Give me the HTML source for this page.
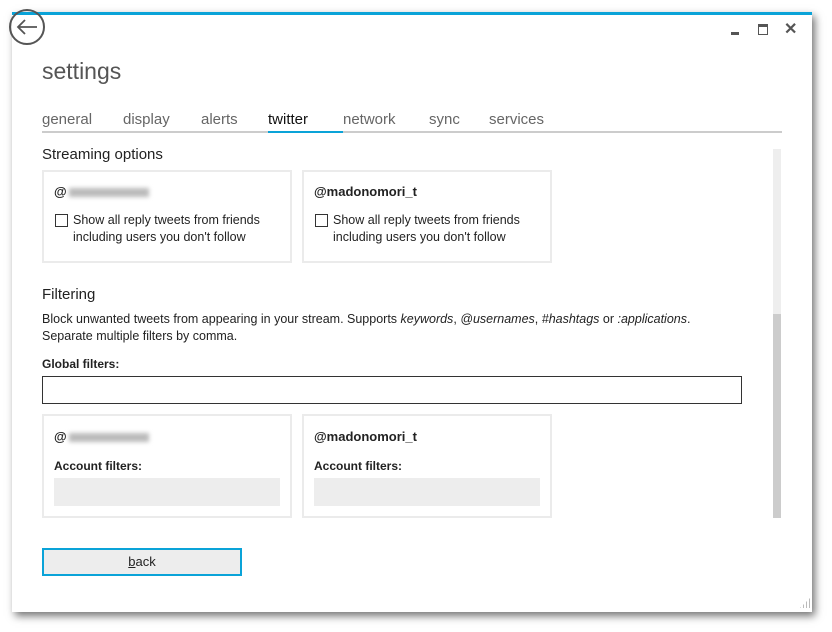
<!DOCTYPE html>
<html><head><meta charset="utf-8"><style>
*{box-sizing:border-box;margin:0;padding:0}
body{width:832px;height:632px;background:#fff;position:relative;overflow:hidden;font-family:"Segoe UI","Liberation Sans",sans-serif;color:#222}
.win{position:absolute;left:12px;top:12px;width:800px;height:600px;background:#fff;box-shadow:3px 4px 8px rgba(0,0,0,.55);border-top:3px solid #0aa3d8}
.abs{position:absolute}
.t{font-size:12.5px;color:#222}
.card{position:absolute;border:2px solid #ebebeb;background:#fff}
.tab{position:absolute;top:111px;font-size:15px;color:#666}
.cb{position:absolute;width:13px;height:13px;border:1px solid #333;background:#fff}
.blur{display:inline-block;width:80px;height:9px;background:#bbb;filter:blur(2px);vertical-align:middle;margin-left:2px}
.b{font-weight:bold;font-size:13px}
</style></head><body>
<div class="win"></div>
<svg class="abs" style="left:8px;top:8px" width="40" height="40"><circle cx="19" cy="19" r="17" fill="none" stroke="#555" stroke-width="2"/><path d="M29 19H10M17 12l-7 7 7 7" fill="none" stroke="#555" stroke-width="1.8"/></svg>
<div class="abs" style="left:731px;top:32px;width:8px;height:3px;background:#555"></div>
<div class="abs" style="left:758px;top:24px;width:10px;height:11px;border:1.5px solid #555;border-top-width:3px"></div>
<div class="abs" style="left:784px;top:19px;font-size:16px;font-weight:bold;color:#555">✕</div>
<div class="abs" style="left:42px;top:58px;font-size:23px;color:#555">settings</div>
<div class="tab" style="left:42px">general</div>
<div class="tab" style="left:123px">display</div>
<div class="tab" style="left:201px">alerts</div>
<div class="tab" style="left:268px;color:#111">twitter</div>
<div class="tab" style="left:343px">network</div>
<div class="tab" style="left:429px">sync</div>
<div class="tab" style="left:489px">services</div>
<div class="abs" style="left:42px;top:131px;width:740px;height:2px;background:#ccc"></div>
<div class="abs" style="left:268px;top:131px;width:75px;height:2px;background:#0aa3d8"></div>
<div class="abs" style="left:773px;top:149px;width:8px;height:165px;background:#eee"></div>
<div class="abs" style="left:773px;top:314px;width:8px;height:204px;background:#ccc"></div>
<div class="abs" style="left:42px;top:146px;font-size:15px;color:#222">Streaming options</div>
<div class="card" style="left:42px;top:170px;width:250px;height:93px"></div>
<div class="card" style="left:302px;top:170px;width:250px;height:93px"></div>
<div class="abs b" style="left:54px;top:184px">@<span class="blur"></span></div>
<div class="abs b" style="left:314px;top:184px">@madonomori_t</div>
<div class="cb" style="left:55px;top:214px"></div>
<div class="cb" style="left:315px;top:214px"></div>
<div class="abs t" style="left:73px;top:212px;line-height:17px">Show all reply tweets from friends<br>including users you don't follow</div>
<div class="abs t" style="left:333px;top:212px;line-height:17px">Show all reply tweets from friends<br>including users you don't follow</div>
<div class="abs" style="left:42px;top:286px;font-size:15px">Filtering</div>
<div class="abs t" style="left:42px;top:311px;line-height:17px">Block unwanted tweets from appearing in your stream. Supports <i>keywords</i>, <i>@usernames</i>, <i>#hashtags</i> or <i>:applications</i>.<br>Separate multiple filters by comma.</div>
<div class="abs t" style="left:42px;top:357px;font-weight:bold;font-size:12px">Global filters:</div>
<div class="abs" style="left:42px;top:376px;width:700px;height:28px;border:1px solid #333"></div>
<div class="card" style="left:42px;top:414px;width:250px;height:104px"></div>
<div class="card" style="left:302px;top:414px;width:250px;height:104px"></div>
<div class="abs b" style="left:54px;top:429px">@<span class="blur"></span></div>
<div class="abs b" style="left:314px;top:429px">@madonomori_t</div>
<div class="abs t" style="left:54px;top:459px;font-weight:bold;font-size:12px">Account filters:</div>
<div class="abs t" style="left:314px;top:459px;font-weight:bold;font-size:12px">Account filters:</div>
<div class="abs" style="left:54px;top:478px;width:226px;height:28px;background:#ededed"></div>
<div class="abs" style="left:314px;top:478px;width:226px;height:28px;background:#ededed"></div>
<div class="abs" style="left:42px;top:548px;width:200px;height:28px;border:2px solid #0aa3d8;background:#ededed;text-align:center;font-size:13px;line-height:24px"><u>b</u>ack</div>
<div class="abs" style="left:800px;top:598px;width:10px;height:10px;background:repeating-linear-gradient(90deg,#bbb 0 1px,transparent 1px 3px);clip-path:polygon(100% 0,100% 100%,0 100%)"></div>
</body></html>
